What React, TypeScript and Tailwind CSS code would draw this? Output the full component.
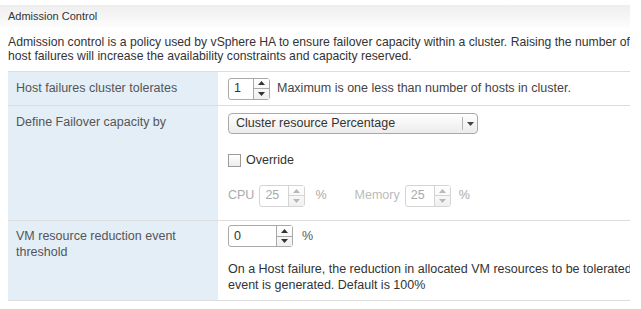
import React from 'react';

function Spinner({ value, width, disabled = false }: { value: string; width: number; disabled?: boolean }) {
  const border = disabled ? 'border-[#d4d4d4]' : 'border-[#a9a9a9]';
  const arrow = disabled ? 'text-[#b8b8b8]' : 'text-[#333]';
  return (
    <div
      className={`flex h-[22px] rounded-[3px] border bg-white ${border}`}
      style={{ width }}
    >
      <div className={`flex flex-1 items-center pl-[5px] ${disabled ? 'text-[#aaa]' : 'text-[#333]'}`}>
        {value}
      </div>
      <div className={`flex w-[16px] flex-col border-l ${border} bg-gradient-to-b from-white to-[#f0f0f0]`}>
        <div className={`flex flex-1 items-center justify-center border-b ${border} ${arrow}`}>
          <svg width="7" height="4" viewBox="0 0 7 4">
            <path d="M0 4 L3.5 0 L7 4 Z" fill="currentColor" />
          </svg>
        </div>
        <div className={`flex flex-1 items-center justify-center ${arrow}`}>
          <svg width="7" height="4" viewBox="0 0 7 4">
            <path d="M0 0 L3.5 4 L7 0 Z" fill="currentColor" />
          </svg>
        </div>
      </div>
    </div>
  );
}

export default function App() {
  return (
    <div
      className="h-[309px] w-[641px] overflow-hidden bg-white text-[12.5px]"
      style={{ fontFamily: '"Liberation Sans", Arial, sans-serif' }}
    >
      <div className="w-[630px] overflow-hidden">
        <div className="mt-[5px] flex h-[23px] items-center bg-gradient-to-b from-[#eeeeee] to-[#fdfdfd] pl-2 text-[11px] text-[#333]">
          Admission Control
        </div>

        <div className="ml-2 border-b border-[#dddddd] pt-[7px] pb-[8px] text-[12.2px] leading-[14px] text-[#333]">
          <div className="w-[624px] overflow-hidden whitespace-nowrap">
            Admission control is a policy used by vSphere HA to ensure failover capacity within a cluster. Raising the number of
          </div>
          <div className="whitespace-nowrap">
            host failures will increase the availability constraints and capacity reserved.
          </div>
        </div>

        <div className="ml-2">
          <div className="grid h-[34px] grid-cols-[210px_1fr] border-b border-[#dddddd]">
            <div className="flex items-center bg-[#e3eef7] pl-2 text-[#555]">Host failures cluster tolerates</div>
            <div className="flex items-center gap-[7px] pl-[10px]">
              <Spinner value="1" width={42} />
              <span className="text-[#444]">Maximum is one less than number of hosts in cluster.</span>
            </div>
          </div>

          <div className="grid h-[115px] grid-cols-[210px_1fr] border-b border-[#dddddd]">
            <div className="bg-[#e3eef7] pt-[7px] pl-2 text-[#555]">Define Failover capacity by</div>
            <div className="flex flex-col pt-[7px] pl-[10px]">
              <div className="flex h-[21px] w-[250px] rounded-[4px] border border-[#a9a9a9] bg-gradient-to-b from-white to-[#ececec]">
                <div className="flex flex-1 items-center pl-[7px] text-[#333]">Cluster resource Percentage</div>
                <div className="my-[3px] border-l border-[#b5b5b5]" />
                <div className="flex w-[14px] items-center justify-center text-[#444]">
                  <svg width="7" height="4" viewBox="0 0 7 4">
                    <path d="M0 0 L3.5 4 L7 0 Z" fill="currentColor" />
                  </svg>
                </div>
              </div>
              <div className="mt-[17px] flex items-center gap-[5px]">
                <div className="h-[13px] w-[13px] border border-[#9a9a9a] bg-gradient-to-b from-white to-[#ececec]" />
                <span className="text-[#333]">Override</span>
              </div>
              <div className="mt-[15px] flex items-center text-[#aaa]">
                <span className="mr-[5px]">CPU</span>
                <Spinner value="25" width={46} disabled />
                <span className="ml-[10px]">%</span>
                <span className="ml-[28px] mr-[5px] text-[#bbb]">Memory</span>
                <Spinner value="25" width={46} disabled />
                <span className="ml-[8px]">%</span>
              </div>
            </div>
          </div>

          <div className="grid h-[80px] grid-cols-[210px_1fr] border-b border-[#dddddd]">
            <div className="bg-[#e3eef7] pt-[7px] pl-2 leading-[16px] text-[#555]">
              VM resource reduction event
              <br />
              threshold
            </div>
            <div className="flex flex-col pt-[4px] pl-[10px]">
              <div className="flex items-center gap-[9px]">
                <Spinner value="0" width={65} />
                <span className="text-[#555]">%</span>
              </div>
              <div className="mt-[14px] leading-[16px] text-[#333]">
                <div className="whitespace-nowrap">
                  On a Host failure, the reduction in allocated VM resources to be tolerated before an
                </div>
                <div className="whitespace-nowrap">event is generated. Default is 100%</div>
              </div>
            </div>
          </div>
        </div>
      </div>
    </div>
  );
}
